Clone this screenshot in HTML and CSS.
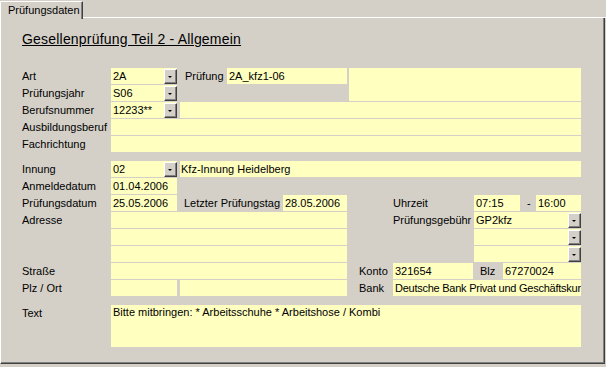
FILE: index.html
```html
<html lang="de">
<head>
<meta charset="UTF-8" />
<title>Prüfungsdaten</title>
<link rel="stylesheet" href="styles.css">
</head>
<body>

<div class="tabs">
  <div class="tab">Prüfungsdaten</div>
  <div class="tab-fill"></div>
</div>

<div class="page">
  <div class="title">Gesellenprüfung Teil 2 - Allgemein</div>

  <!-- Stammdaten -->
  <div class="section top">
    <div class="pair">
      <div class="pair-left">
        <div class="row">
          <div class="label">Art</div>
          <div class="combo w66"><span class="val">2A</span><span class="btn"><i></i></span></div>
          <div class="label w47 ml3 pl5">Prüfung</div>
          <div class="field w120">2A_kfz1-06</div>
        </div>
        <div class="row">
          <div class="label">Prüfungsjahr</div>
          <div class="combo w66"><span class="val">S06</span><span class="btn"><i></i></span></div>
        </div>
      </div>
      <div class="field big"></div>
    </div>
    <div class="row">
      <div class="label">Berufsnummer</div>
      <div class="combo w66"><span class="val">12233**</span><span class="btn"><i></i></span></div>
      <div class="field w401 ml3"></div>
    </div>
    <div class="row">
      <div class="label">Ausbildungsberuf</div>
      <div class="field w470"></div>
    </div>
    <div class="row">
      <div class="label">Fachrichtung</div>
      <div class="field w470"></div>
    </div>
  </div>

  <!-- Termin und Ort -->
  <div class="section bottom">
    <div class="row">
      <div class="label">Innung</div>
      <div class="combo w66"><span class="val">02</span><span class="btn"><i></i></span></div>
      <div class="field w401 ml3 pl1">Kfz-Innung Heidelberg</div>
    </div>
    <div class="row">
      <div class="label">Anmeldedatum</div>
      <div class="field w66">01.04.2006</div>
    </div>
    <div class="row">
      <div class="label">Prüfungsdatum</div>
      <div class="field w66">25.05.2006</div>
      <div class="label w103 ml3 pl4">Letzter Prüfungstag</div>
      <div class="field w64">28.05.2006</div>
      <div class="label w127 pl46">Uhrzeit</div>
      <div class="field w46">07:15</div>
      <div class="label dash">-</div>
      <div class="field w45">16:00</div>
    </div>
    <div class="row">
      <div class="label">Adresse</div>
      <div class="field w236"></div>
      <div class="label w127 pl46">Prüfungsgebühr</div>
      <div class="combo w107"><span class="val">GP2kfz</span><span class="btn"><i></i></span></div>
    </div>
    <div class="row">
      <div class="label"></div>
      <div class="field w236"></div>
      <div class="label w127"></div>
      <div class="combo w107"><span class="val"></span><span class="btn"><i></i></span></div>
    </div>
    <div class="row">
      <div class="label"></div>
      <div class="field w236"></div>
      <div class="label w127"></div>
      <div class="combo w107"><span class="val"></span><span class="btn"><i></i></span></div>
    </div>
    <div class="row">
      <div class="label">Straße</div>
      <div class="field w236"></div>
      <div class="label w46 pl12">Konto</div>
      <div class="field w80">321654</div>
      <div class="label w30 pl7">Blz</div>
      <div class="field w78">67270024</div>
    </div>
    <div class="row">
      <div class="label">Plz / Ort</div>
      <div class="field w66"></div>
      <div class="field w167 ml3"></div>
      <div class="label w46 pl12">Bank</div>
      <div class="field w188 tight">Deutsche Bank Privat und Geschäftskur</div>
    </div>
    <div class="row text-row">
      <div class="label">Text</div>
      <div class="field w470 memo">Bitte mitbringen: * Arbeitsschuhe * Arbeitshose / Kombi</div>
    </div>
  </div>
</div>

</body>
</html>
```

FILE: styles.css
```css
* {
  box-sizing: border-box;
}
body {
  font-family: "Liberation Sans", Arial, sans-serif;
  font-size: 11px;
  background-color: #d4d0c8;
  color: #000;
  margin: 0;
  padding: 0;
  width: 606px;
  height: 367px;
  overflow: hidden;
}

/* Reiter */
.tabs {
  display: flex;
  height: 18px;
}
.tab {
  width: 83px;
  height: 18px;
  margin-top: 1px;
  padding-left: 7px;
  line-height: 16px;
  border-left: 1px solid #fff;
  border-top: 1px solid #fff;
  border-right: 1px solid #404040;
  box-shadow: inset -1px 0 #808080;
  position: relative;
  z-index: 1;
  background-color: #d4d0c8;
}
.tab-fill {
  flex: 1;
  border-bottom: 1px solid #fff;
}
.page {
  width: 605px;
  height: 347px;
  margin-top: -1px;
  padding-left: 21px;
  border-left: 1px solid #fff;
  border-right: 1px solid #404040;
  border-bottom: 1px solid #404040;
  box-shadow: inset -1px -1px #808080;
}

.title {
  font-size: 14px;
  letter-spacing: 0.2px;
  line-height: 16px;
  text-decoration: underline;
  padding-top: 14px;
}

.section.top {
  margin-top: 21px;
}
.section.bottom {
  margin-top: 9px;
}
.pair {
  display: flex;
}
.pair-left {
  width: 325px;
}
.row {
  display: flex;
  height: 16px;
  margin-bottom: 1px;
}
.text-row {
  height: 42px;
  margin-top: 9px;
}

.label {
  width: 89px;
  line-height: 16px;
  white-space: nowrap;
}
.field {
  background-color: #ffffc0;
  height: 16px;
  line-height: 16px;
  padding-left: 2px;
  white-space: nowrap;
  overflow: hidden;
}
.field.big {
  width: 232px;
  height: 33px;
  margin-left: 2px;
}
.field.memo {
  height: 42px;
  line-height: 15px;
}
.field.tight {
  letter-spacing: -0.25px;
}

.combo {
  display: flex;
  background-color: #ffffc0;
  height: 16px;
}
.combo .val {
  flex: 1;
  line-height: 16px;
  padding-left: 2px;
}
.combo .btn {
  width: 13px;
  height: 15px;
  margin-top: 1px;
  background-color: #d4d0c8;
  border-top: 1px solid #fff;
  border-left: 1px solid #fff;
  border-right: 1px solid #404040;
  border-bottom: 1px solid #404040;
  box-shadow: inset -1px -1px #808080;
  display: flex;
  align-items: center;
  justify-content: center;
}
.combo .btn i {
  width: 0;
  height: 0;
  margin-left: -1px;
  border-left: 2px solid transparent;
  border-right: 2px solid transparent;
  border-top: 2px solid #000;
}

.dash {
  width: 16px;
  padding-left: 7px;
}

/* Breiten */
.w30 { width: 30px; }
.w45 { width: 45px; }
.w46 { width: 46px; }
.w47 { width: 47px; }
.w64 { width: 64px; }
.w66 { width: 66px; }
.w78 { width: 78px; }
.w80 { width: 80px; }
.w103 { width: 103px; }
.w107 { width: 107px; }
.w120 { width: 120px; }
.w127 { width: 127px; }
.w167 { width: 167px; }
.w188 { width: 188px; }
.w236 { width: 236px; }
.w401 { width: 401px; }
.w470 { width: 470px; }
.ml3 { margin-left: 3px; }
.pl1 { padding-left: 1px; }
.pl4 { padding-left: 4px; }
.pl5 { padding-left: 5px; }
.pl7 { padding-left: 7px; }
.pl12 { padding-left: 12px; }
.pl46 { padding-left: 46px; }
```
